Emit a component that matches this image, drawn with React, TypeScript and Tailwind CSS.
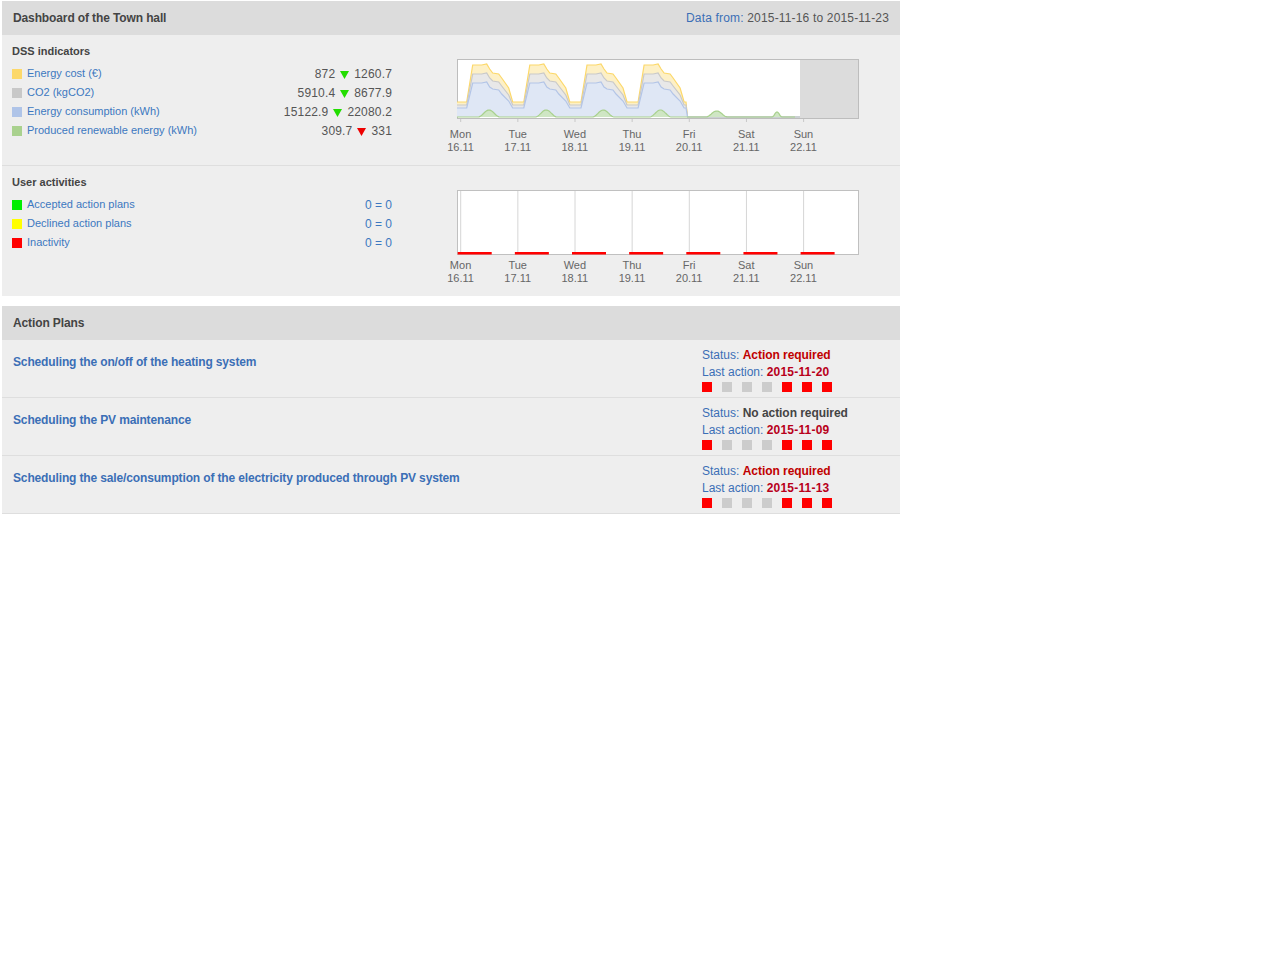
import React from "react";

const FONT = { fontFamily: '"Liberation Sans", Arial, Helvetica, sans-serif' };

const days = [
  { d: "Mon", n: "16.11" },
  { d: "Tue", n: "17.11" },
  { d: "Wed", n: "18.11" },
  { d: "Thu", n: "19.11" },
  { d: "Fri", n: "20.11" },
  { d: "Sat", n: "21.11" },
  { d: "Sun", n: "22.11" },
];

const indicators = [
  { label: "Energy cost (€)", color: "bg-[#fcd86a]", a: "872", b: "1260.7", up: false },
  { label: "CO2 (kgCO2)", color: "bg-[#c8c8c8]", a: "5910.4", b: "8677.9", up: false },
  { label: "Energy consumption (kWh)", color: "bg-[#afc4e8]", a: "15122.9", b: "22080.2", up: false },
  { label: "Produced renewable energy (kWh)", color: "bg-[#a9d18e]", a: "309.7", b: "331", up: true },
];

const activities = [
  { label: "Accepted action plans", color: "bg-[#00ee00]" },
  { label: "Declined action plans", color: "bg-[#ffff00]" },
  { label: "Inactivity", color: "bg-[#ff0000]" },
];

const plans = [
  { title: "Scheduling the on/off of the heating system", status: "Action required", ok: false, date: "2015-11-20" },
  { title: "Scheduling the PV maintenance", status: "No action required", ok: true, date: "2015-11-09" },
  {
    title: "Scheduling the sale/consumption of the electricity produced through PV system",
    status: "Action required",
    ok: false,
    date: "2015-11-13",
  },
];

const squares = [true, false, false, false, true, true, true];

const T0 = 3.7;
const P = 57.15;
const BOTTOM = 58;

function series(low: number, plat: number, mid: number, fall: number) {
  const pts: [number, number][] = [[0, low]];
  for (let i = 0; i < 4; i++) {
    const t = T0 + P * i;
    pts.push(
      [t + 6, low],
      [t + 12, plat],
      [t + 21, plat],
      [t + 26, plat + 1],
      [t + 29, plat - 4],
      [t + 32, mid + 1],
      [t + 38, mid],
      [t + 41, mid - 4],
      [t + 48, fall],
      [t + 52, low],
    );
  }
  pts.push([229, low], [230.5, 0], [343, 0]);
  return pts;
}

function green() {
  const bumps = [0, 1, 2, 3].map((i) => ({ c: T0 + 28.3 + P * i, h: 7, w: 11 }));
  bumps.push({ c: 259.7, h: 6, w: 11 }, { c: 320, h: 5, w: 5 });
  const pts: [number, number][] = [];
  for (let x = 0; x <= 338; x += 1) {
    let h = 0;
    for (const b of bumps) {
      const d = Math.abs(x - b.c);
      if (d < b.w) h = Math.max(h, b.h * Math.pow(Math.cos((d / b.w) * (Math.PI / 2)), 2));
    }
    pts.push([x, h]);
  }
  return pts;
}

function line(pts: [number, number][]) {
  return pts.map(([x, h], i) => `${i ? "L" : "M"}${x.toFixed(1)} ${(BOTTOM - h).toFixed(1)}`).join(" ");
}

function area(pts: [number, number][]) {
  const last = pts[pts.length - 1][0];
  return `${line(pts)} L${last} ${BOTTOM} L0 ${BOTTOM} Z`;
}

function EnergyChart() {
  const layers = [
    { pts: series(15, 52, 43, 29), fill: "#fdf0c6", stroke: "#fcd86a" },
    { pts: series(12, 43, 35, 22), fill: "#e8e8e8", stroke: "#c9c9c9" },
    { pts: series(9, 34, 27, 16), fill: "#dfe7f5", stroke: "#b3c5e7" },
    { pts: green(), fill: "#cfe6c4", stroke: "#a9d18e" },
  ];
  return (
    <svg width="402" height="65" className="block">
      <rect x="0.5" y="0.5" width="401" height="59" fill="#ffffff" stroke="#bdbdbd" />
      <rect x="343" y="1" width="58" height="58" fill="#dcdcdc" />
      {layers.map((l, i) => (
        <g key={i}>
          <path d={area(l.pts)} fill={l.fill} />
          <path d={line(l.pts)} fill="none" stroke={l.stroke} strokeWidth="1.2" />
        </g>
      ))}
      {days.map((_, i) => (
        <line key={i} x1={T0 + P * i} x2={T0 + P * i} y1="60" y2="63" stroke="#c8c8c8" />
      ))}
    </svg>
  );
}

function ActivityChart() {
  return (
    <svg width="402" height="65" className="block">
      <rect x="0.5" y="0.5" width="401" height="64" fill="#ffffff" stroke="#c0c0c0" />
      {days.map((_, i) => (
        <g key={i}>
          <line x1={T0 + P * i} x2={T0 + P * i} y1="1" y2="64" stroke="#d6d6d6" />
          <rect x={T0 + P * i - 3} y="62" width="34" height="2.5" fill="#ff0000" />
        </g>
      ))}
    </svg>
  );
}

function DayLabels() {
  return (
    <div className="mt-[4px] grid w-[400px] grid-cols-7 text-[11px] leading-[13px] text-[#666]">
      {days.map((d) => (
        <div key={d.d} className="text-center">
          <div>{d.d}</div>
          <div>{d.n}</div>
        </div>
      ))}
    </div>
  );
}

function Triangle({ up }: { up: boolean }) {
  return (
    <svg width="9" height="8" className="mx-[5px] inline-block align-[-1px]">
      <polygon points="0,0 9,0 4.5,8" fill={up ? "#ee0000" : "#22dd00"} />
    </svg>
  );
}

export default function App() {
  return (
    <div style={FONT} className="pl-[2px] pt-[1px]">
      <div className="w-[898px]">
        <div className="flex h-[34px] items-center justify-between bg-[#dcdcdc] px-[11px] text-[12px]">
          <span className="font-bold tracking-[-0.12px] text-[#444]">Dashboard of the Town hall</span>
          <span className="tracking-[0.17px] text-[#555]">
            <span className="text-[#3b6fb6]">Data from: </span>2015-11-16 to 2015-11-23
          </span>
        </div>

        <div className="flex h-[131px] border-b border-[#dedede] bg-[#eeeeee] pl-[10px]">
          <div className="w-[380px] pt-[9px]">
            <div className="text-[11px] font-bold leading-[14px] text-[#444]">DSS indicators</div>
            <div className="mt-[6px]">
              {indicators.map((it) => (
                <div key={it.label} className="flex h-[19px] items-center">
                  <span className={`h-[10px] w-[10px] ${it.color}`} />
                  <span className="ml-[5px] flex-1 text-[11px] text-[#3c78c0]">{it.label}</span>
                  <span className="text-[12px] tracking-[0.17px] text-[#555]">
                    {it.a}
                    <Triangle up={it.up} />
                    {it.b}
                  </span>
                </div>
              ))}
            </div>
          </div>
          <div className="ml-[40px] pt-[24px]">
            <div className="ml-[25px]">
              <EnergyChart />
            </div>
            <DayLabels />
          </div>
        </div>

        <div className="flex h-[130px] bg-[#eeeeee] pl-[10px]">
          <div className="w-[380px] pt-[9px]">
            <div className="text-[11px] font-bold leading-[14px] text-[#444]">User activities</div>
            <div className="mt-[6px]">
              {activities.map((it) => (
                <div key={it.label} className="flex h-[19px] items-center">
                  <span className={`h-[10px] w-[10px] ${it.color}`} />
                  <span className="ml-[5px] flex-1 text-[11px] text-[#3c78c0]">{it.label}</span>
                  <span className="text-[12px] text-[#3c78c0]">0 = 0</span>
                </div>
              ))}
            </div>
          </div>
          <div className="ml-[40px] pt-[24px]">
            <div className="ml-[25px]">
              <ActivityChart />
            </div>
            <DayLabels />
          </div>
        </div>

        <div className="mt-[10px] flex h-[34px] items-center bg-[#dcdcdc] px-[11px] text-[12px] font-bold tracking-[-0.12px] text-[#444]">
          Action Plans
        </div>
        {plans.map((p) => (
          <div key={p.title} className="flex h-[58px] border-b border-[#dedede] bg-[#eeeeee] text-[12px] leading-[17px]">
            <div className="flex-1 pl-[11px] pt-[14px] font-bold tracking-[-0.14px] text-[#3b6fb6]">{p.title}</div>
            <div className="w-[198px] pt-[7px]">
              <div className="text-[#3b6fb6]">
                Status:{" "}
                <span className={`font-bold tracking-[-0.05px] ${p.ok ? "text-[#444]" : "text-[#c00000]"}`}>{p.status}</span>
              </div>
              <div className="text-[#3b6fb6]">
                Last action: <span className="font-bold tracking-[0.2px] text-[#b8001a]">{p.date}</span>
              </div>
              <div className="mt-[1px] flex gap-[10px]">
                {squares.map((on, i) => (
                  <span key={i} className={`h-[10px] w-[10px] ${on ? "bg-[#ff0000]" : "bg-[#cccccc]"}`} />
                ))}
              </div>
            </div>
          </div>
        ))}
      </div>
    </div>
  );
}
